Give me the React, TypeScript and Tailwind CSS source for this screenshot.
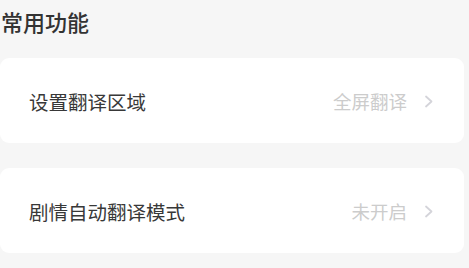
import React from "react";

const font = { fontFamily: '"Noto Sans CJK SC", "Noto Sans", sans-serif' };

function Chevron() {
  return (
    <svg width="10" height="13" viewBox="0 0 10 13" fill="none" className="ml-[17px]">
      <polyline points="2,1.5 7.5,6.5 2,11.5" stroke="#d4d4da" strokeWidth="1.8" strokeLinecap="round" strokeLinejoin="round" />
    </svg>
  );
}

function Row({ label, value }: { label: string; value: string }) {
  return (
    <div className="h-[85px] bg-white rounded-[9px] flex items-center pl-[29px] pr-[30px] pt-[2px]">
      <span className="text-[19.5px] text-[#383838] leading-none">{label}</span>
      <span className="ml-auto text-[18.5px] text-[#cccccc] leading-none">{value}</span>
      <Chevron />
    </div>
  );
}

export default function App() {
  return (
    <div className="w-[469px] h-[268px] bg-[#f6f6f6] overflow-hidden pr-[5px]" style={font}>
      <div className="pt-[6px] pl-[1px] text-[22px] leading-[30px] font-medium text-[#333333]">常用功能</div>
      <div className="mt-[22px] flex flex-col gap-[25px]">
        <Row label="设置翻译区域" value="全屏翻译" />
        <Row label="剧情自动翻译模式" value="未开启" />
      </div>
    </div>
  );
}
